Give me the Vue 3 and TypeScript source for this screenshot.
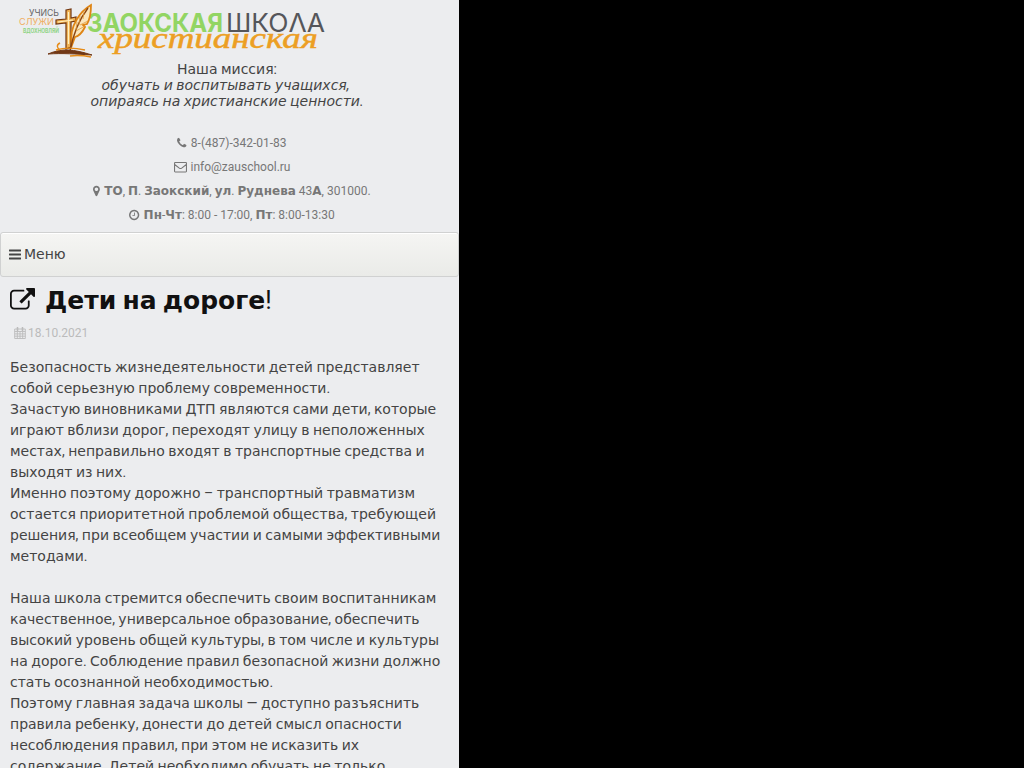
<script setup lang="ts">
import { defineComponent, h } from 'vue'

// Splits text so that Cyrillic words use their own face while digits,
// punctuation and spaces keep the base font.
const T = defineComponent({
  props: { s: { type: String, required: true } },
  setup(props) {
    return () =>
      props.s
        .split(/([\u0400-\u04ff]+)/)
        .filter((p) => p.length > 0)
        .map((p) => (/[\u0400-\u04ff]/.test(p) ? h('span', { class: 'cyr' }, p) : p))
  },
})

const lines: string[] = [
  'Безопасность жизнедеятельности детей представляет',
  'собой серьезную проблему современности.',
  'Зачастую виновниками ДТП являются сами дети, которые',
  'играют вблизи дорог, переходят улицу в неположенных',
  'местах, неправильно входят в транспортные средства и',
  'выходят из них.',
  'Именно поэтому дорожно – транспортный травматизм',
  'остается приоритетной проблемой общества, требующей',
  'решения, при всеобщем участии и самыми эффективными',
  'методами.',
  '',
  'Наша школа стремится обеспечить своим воспитанникам',
  'качественное, универсальное образование, обеспечить',
  'высокий уровень общей культуры, в том числе и культуры',
  'на дороге. Соблюдение правил безопасной жизни должно',
  'стать осознанной необходимостью.',
  'Поэтому главная задача школы — доступно разъяснить',
  'правила ребенку, донести до детей смысл опасности',
  'несоблюдения правил, при этом не исказить их',
  'содержание. Детей необходимо обучать не только',
]
</script>

<template>
  <div class="page">
    <header>
      <svg class="logo" width="340" height="61" viewBox="0 0 340 61">
        <text class="geo" x="29" y="16" font-size="9" fill="#666" textLength="30" lengthAdjust="spacingAndGlyphs">УЧИСЬ</text>
        <text class="geo" x="19" y="25" font-size="9.5" fill="#f0ad62" textLength="35" lengthAdjust="spacingAndGlyphs">СЛУЖИ</text>
        <text class="geo" x="23" y="32.500" font-size="5.5" font-weight="700" fill="#8fd485" textLength="36" lengthAdjust="spacingAndGlyphs">ВДОХНОВЛЯЙ</text>
        <text class="geo" x="87" y="31.500" font-size="25" font-weight="700" fill="#92d563" textLength="136" lengthAdjust="spacingAndGlyphs">ЗАОКСКАЯ</text>
        <text class="geo" x="226" y="31.500" font-size="25.500" fill="#55565a" textLength="99" lengthAdjust="spacingAndGlyphs">ШКОΛА</text>
        <text class="script" x="98" y="48" font-size="29" fill="#ec9f24" stroke="#ec9f24" stroke-width=".5" textLength="220" lengthAdjust="spacingAndGlyphs">христианская</text>
        <path d="M66 10l5-1v9l5-1v4l-5 1v25l-5 2V23l-10 1v-4l10-1z" fill="#efb052" stroke="#70350f" stroke-width="1.200" />
        <path d="M68.500 12v32M58 22l15-2" fill="none" stroke="#fff0c0" stroke-width="1.200" />
        <path d="M72 45C70 36 72 27 77 19 81 12 86 8 91 5c0 8-1 14-4 19l-4 1 2 2c-3 6-6 9-10 10z" fill="#fae6bd" stroke="#df8515" stroke-width="1.800" />
        <path d="M70 51c3-16 8-30 18-43" fill="none" stroke="#8a4412" stroke-width="1.400" />
        <path d="M76 30l1-8m2 3 1-9m3 3 1-7m-8 19 9-5m-5-1 8-4" fill="none" stroke="#e19a38" stroke-width=".8" />
        <path d="M48 54c14-6 25-5 44 1-17-1-29-2-44-1z" fill="#713816" stroke="#713816" />
        <path d="M56 50c10-3 20-2 29 0M70 56c8-1 16 0 21 1M60 43c-4 2-3 5 0 7" fill="none" stroke="#e68c19" stroke-width="1.400" />
      </svg>
      <p class="mission"><T s="Наша миссия:" /></p>
      <p class="mission motto first"><T s="обучать и воспитывать учащихся," /></p>
      <p class="mission motto"><T s="опираясь на христианские ценности." /></p>
      <ul class="contacts">
        <li>
          <svg viewBox="192 0 1408 1792" width="9.43" height="12"><path fill="currentColor" d="M1600 1240q0 27-10 70.5t-21 68.5q-21 50-122 106-94 51-186 51-27 0-53-3.5t-57.5-12.5-47-14.5-55.5-20.5-49-18q-98-35-175-83-127-79-264-216t-216-264q-48-77-83-175-3-9-18-49t-20.5-55.5-14.5-47-12.5-57.5-3.5-53q0-92 51-186 56-101 106-122 25-11 68.5-21t70.5-10q14 0 21 3 18 6 53 76 11 19 30 54t35 63.5 31 53.5q3 4 17.5 25t21.5 35.5 7 28.5q0 20-28.5 50t-62 55-62 53-28.5 46q0 9 5 22.5t8.5 20.5 14 24 11.5 19q76 137 174 235t235 174q2 1 19 11.5t24 14 20.5 8.5 22.5 5q18 0 46-28.5t53-62 55-62 50-28.5q14 0 28.5 7t35.5 21.5 25 17.5q25 15 53.5 31t63.5 35 54 30q70 35 76 53 3 7 3 21z" /></svg>
          <span>8-(487)-342-01-83</span>
        </li>
        <li>
          <svg viewBox="0 0 12 12" width="13" height="12" preserveAspectRatio="none"><path d="M1.1 1.500h9.800q.6 0 .6.6v8.200q0 .6-.6.6H1.100q-.6 0-.6-.6V2.100q0-.6.6-.6zM.6 3.500 4.900 7.200q1.100.8 2.200 0l4.300-3.700" fill="none" stroke="currentColor" stroke-width="1" /></svg>
          <span>info@zauschool.ru</span>
        </li>
        <li>
          <svg viewBox="384 0 1024 1792" width="6.86" height="12"><path fill="currentColor" d="M1152 640q0-106-75-181t-181-75-181 75-75 181 75 181 181 75 181-75 75-181zm256 0q0 109-33 179l-364 774q-16 33-47.5 52t-67.5 19-67.5-19-46.500-52l-365-774q-33-70-33-179 0-212 150-362t362-150 362 150 150 362z" /></svg>
          <span><b><T s="ТО" /></b>, <b><T s="П" /></b>. <b><T s="Заокский" /></b>, <b><T s="ул" /></b>. <b><T s="Руднева" /></b> 43<b><T s="А" /></b>, 301000.</span>
        </li>
        <li>
          <svg viewBox="128 0 1536 1792" width="10.29" height="12"><path fill="currentColor" d="M1024 544v448q0 14-9 23t-23 9h-320q-14 0-23-9t-9-23v-64q0-14 9-23t23-9h224v-352q0-14 9-23t23-9h64q14 0 23 9t9 23zm416 352q0-148-73-273t-198-198-273-73-273 73-198 198-73 273 73 273 198 198 273 73 273-73 198-198 73-273zm224 0q0 209-103 385.500t-279.500 279.500-385.500 103-385.500-103-279.500-279.500-103-385.500 103-385.500 279.500-279.500 385.500-103 385.500 103 279.500 279.500 103 385.500z" /></svg>
          <span><b><T s="Пн" /></b>-<b><T s="Чт" /></b>: 8:00 - 17:00, <b><T s="Пт" /></b>: 8:00-13:30</span>
        </li>
      </ul>
    </header>
    <nav>
      <svg viewBox="0 0 12 14" width="12" height="14"><path d="M.5 2.500h11M.5 6.500h11M.5 10.500h11" stroke="currentColor" stroke-width="1.800" stroke-linecap="round" /></svg>
      <span><T s="Меню" /></span>
    </nav>
    <article>
      <h1>
        <svg viewBox="0 0 1792 1792" width="25" height="25"><path fill="currentColor" d="M1408 928v320q0 119-84.500 203.500t-203.500 84.500h-832q-119 0-203.500-84.500t-84.500-203.500v-832q0-119 84.500-203.500t203.500-84.500h704q14 0 23 9t9 23v64q0 14-9 23t-23 9h-704q-66 0-113 47t-47 113v832q0 66 47 113t113 47h832q66 0 113-47t47-113v-320q0-14 9-23t23-9h64q14 0 23 9t9 23zm384-864v512q0 26-19 45t-45 19-45-19l-176-176-652 652q-10 10-23 10t-23-10l-114-114q-10-10-10-23t10-23l652-652-176-176q-19-19-19-45t19-45 45-19h512q26 0 45 19t19 45z" /></svg>
        <span class="title"><T s="Дети на дороге" />!</span>
      </h1>
      <div class="date">
        <svg viewBox="0 0 12 12" width="12" height="12"><path d="M.7 2h10.600v9.500H.7zM.7 4.500h10.600M3.300 4.500v7M6 4.500v7M8.700 4.500v7M.7 6.900h10.600M.7 9.200h10.600" fill="none" stroke="currentColor" stroke-width=".9" /><path d="M3.500.8v2.400M8.500.8v2.400" stroke="currentColor" stroke-width="1.700" stroke-linecap="round" /></svg>
        <span>18.10.2021</span>
      </div>
      <div class="text">
        <div v-for="(line, i) in lines" :key="i" class="line"><T :s="line" /></div>
      </div>
    </article>
  </div>
</template>

<style>
body {
  background: #000;
  overflow: hidden;
}
.cyr {
  font-family: 'DejaVu Sans', sans-serif;
  line-height: 0;
}
</style>

<style scoped>
.page {
  box-sizing: border-box;
  width: 459px;
  height: 768px;
  overflow: hidden;
  background: #ecedef;
  color: #444;
  font: 14px/21px Roboto, 'DejaVu Sans', sans-serif;
}
header {
  height: 232px;
}
.logo {
  display: block;
}
.geo {
  font-family: Inter, 'DejaVu Sans', sans-serif;
}
.script {
  font-family: 'Liberation Serif', serif;
  font-style: italic;
}
.mission {
  margin: 0;
  width: 454px;
  text-align: center;
  line-height: 16px;
  white-space: nowrap;
}
.motto {
  font-style: italic;
}
.first {
  width: 451px;
}
.contacts {
  list-style: none;
  margin: 22px 0 0;
  padding: 0 0 0 5px;
  color: #777;
  font-size: 12px;
  line-height: 24px;
}
.contacts li {
  display: flex;
  justify-content: center;
  align-items: center;
  gap: 4px;
  height: 24px;
  white-space: nowrap;
}
nav {
  box-sizing: border-box;
  height: 45px;
  display: flex;
  align-items: center;
  gap: 3px;
  padding: 0 8px;
  border: 1px solid #d0d1d1;
  border-radius: 3px;
  background: linear-gradient(#f5f5f3, #eaebe8);
  box-shadow: inset 0 1px 0 #fff;
}
article {
  padding: 0 10px;
}
h1 {
  display: flex;
  align-items: center;
  gap: 10px;
  height: 46px;
  margin: 0;
  color: #111;
  font-size: 25px;
  font-weight: 400;
  line-height: 46px;
}
.title {
  padding-top: 2px;
}
.title :deep(.cyr) {
  font-weight: 700;
}
.date {
  display: flex;
  align-items: center;
  gap: 2px;
  height: 20px;
  padding-left: 4px;
  color: #bbb;
  font-size: 12px;
}
.text {
  margin-top: 14px;
}
.line {
  height: 21px;
  white-space: nowrap;
}
</style>
